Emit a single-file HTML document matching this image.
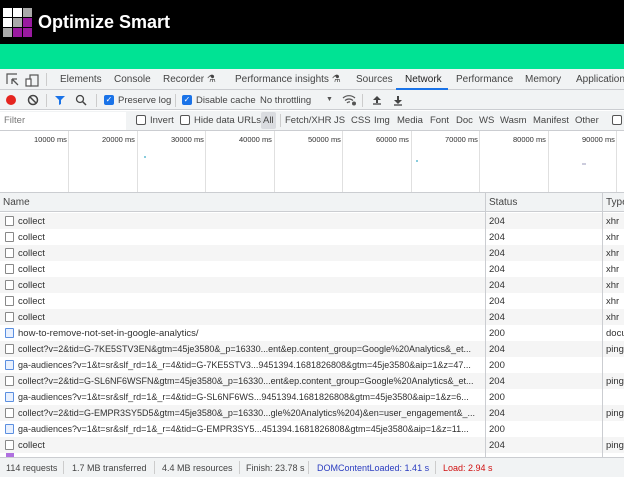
<!DOCTYPE html><html><head><style>
*{margin:0;padding:0;box-sizing:border-box}
body{width:624px;height:477px;overflow:hidden;font-family:"Liberation Sans",sans-serif;font-size:10px;color:#303030;background:#fff;position:relative}
.abs{position:absolute;white-space:nowrap}
.hdr{left:0;top:0;width:624px;height:44px;background:#000}
.grn{left:0;top:44px;width:624px;height:25px;background:#00e394}
.tabs{left:0;top:69px;width:624px;height:21px;background:#f1f3f4;border-bottom:1px solid #cbcdd1}
.tb{left:0;top:90px;width:624px;height:20px;background:#f1f3f4;border-bottom:1px solid #cbcdd1}
.fl{left:0;top:111px;width:624px;height:20px;background:#f1f3f4;border-bottom:1px solid #cbcdd1}
.t{font-size:10px;color:#444}
.s{font-size:9.5px;color:#444}
.cb{width:10px;height:10px;border:1px solid #555;border-radius:2px;background:#fff}
.cbc{width:10px;height:10px;border-radius:2px;background:#1a73e8;color:#fff;font-size:8px;line-height:10px;text-align:center}
.row{left:0;width:624px;height:16px;font-size:9.5px;line-height:17px}
.g{background:#f5f5f5}
.ic{position:absolute;left:5px;top:3px;width:9px;height:10px;border:1px solid #888;border-radius:1px;background:#fff}
.ic.d{border-color:#5b8fe0;background:#e8f0fe}
.vl{top:193px;width:1px;height:264px;background:#cbcdd1}
.tl{top:131px;width:1px;height:61px;background:#e0e0e0}
</style></head><body>
<div class="abs hdr"></div>
<div class="abs" style="left:3px;top:8px;width:30px;height:30px">
<div class="abs" style="left:0;top:0;width:9px;height:9px;background:#fff"></div>
<div class="abs" style="left:10px;top:0;width:9px;height:9px;background:#fff"></div>
<div class="abs" style="left:20px;top:0;width:9px;height:9px;background:#aaa"></div>
<div class="abs" style="left:0;top:10px;width:9px;height:9px;background:#fff"></div>
<div class="abs" style="left:10px;top:10px;width:9px;height:9px;background:#aaa"></div>
<div class="abs" style="left:20px;top:10px;width:9px;height:9px;background:#9a1aa0"></div>
<div class="abs" style="left:0;top:20px;width:9px;height:9px;background:#aaa"></div>
<div class="abs" style="left:10px;top:20px;width:9px;height:9px;background:#9a1aa0"></div>
<div class="abs" style="left:20px;top:20px;width:9px;height:9px;background:#9a1aa0"></div>
</div>
<div class="abs" style="left:38px;top:9px;color:#fff;font-size:18px;font-weight:bold;line-height:26px">Optimize Smart</div>
<div class="abs grn"></div>
<div class="abs tabs"></div>
<svg class="abs" style="left:5px;top:72px" width="36" height="16"><path d="M2 12V2h10" fill="none" stroke="#555" stroke-width="1.2"/><path d="M7 7l6 6M7 7v5M7 7h5" stroke="#555" stroke-width="1.3" fill="none"/><rect x="25" y="3" width="8" height="11" fill="none" stroke="#555" stroke-width="1.2"/><rect x="21" y="7" width="5" height="7" fill="#fff" stroke="#555" stroke-width="1.2"/></svg>
<div class="abs" style="left:46px;top:73px;width:1px;height:13px;background:#ccc"></div>
<div class="abs t" style="left:60px;top:74px">Elements</div>
<div class="abs t" style="left:114px;top:74px">Console</div>
<div class="abs t" style="left:163px;top:74px">Recorder ⚗</div>
<div class="abs t" style="left:235px;top:74px">Performance insights ⚗</div>
<div class="abs t" style="left:356px;top:74px">Sources</div>
<div class="abs t" style="left:405px;top:74px;color:#222">Network</div>
<div class="abs" style="left:396px;top:88px;width:52px;height:2px;background:#1a73e8"></div>
<div class="abs t" style="left:456px;top:74px">Performance</div>
<div class="abs t" style="left:525px;top:74px">Memory</div>
<div class="abs t" style="left:576px;top:74px">Application</div>
<div class="abs tb"></div>
<div class="abs" style="left:6px;top:95px;width:10px;height:10px;border-radius:50%;background:#e52520"></div>
<svg class="abs" style="left:27px;top:94px" width="12" height="12"><circle cx="6" cy="6" r="4.5" fill="none" stroke="#444" stroke-width="1.5"/><path d="M3 3l6 6" stroke="#444" stroke-width="1.5"/></svg>
<div class="abs" style="left:46px;top:94px;width:1px;height:13px;background:#ccc"></div>
<svg class="abs" style="left:54px;top:94px" width="12" height="12"><path d="M1 2h10L7 6v4L5 11V6z" fill="#1a73e8"/></svg>
<svg class="abs" style="left:75px;top:94px" width="12" height="12"><circle cx="5" cy="5" r="3.5" fill="none" stroke="#444" stroke-width="1.3"/><path d="M7.5 7.5L11 11" stroke="#444" stroke-width="1.5"/></svg>
<div class="abs" style="left:96px;top:94px;width:1px;height:13px;background:#ccc"></div>
<div class="abs cbc" style="left:104px;top:95px">✓</div>
<div class="abs s" style="left:118px;top:95px">Preserve log</div>
<div class="abs" style="left:175px;top:94px;width:1px;height:13px;background:#ccc"></div>
<div class="abs cbc" style="left:182px;top:95px">✓</div>
<div class="abs s" style="left:196px;top:95px">Disable cache</div>
<div class="abs s" style="left:260px;top:95px">No throttling</div>
<div class="abs" style="left:326px;top:96px;font-size:7px;color:#555">▼</div>
<svg class="abs" style="left:342px;top:94px" width="16" height="12"><path d="M1 4a9 9 0 0 1 12 0M3 6.5a6 6 0 0 1 8 0M5 9a3 3 0 0 1 3-1" fill="none" stroke="#555" stroke-width="1.2"/><circle cx="12" cy="9.5" r="2" fill="#555"/></svg>
<div class="abs" style="left:362px;top:94px;width:1px;height:13px;background:#ccc"></div>
<svg class="abs" style="left:371px;top:94px" width="40" height="12"><path d="M2 6l4-4 4 4z" fill="#444"/><path d="M5 5h2v4H5z" fill="#444"/><path d="M2 10h8" stroke="#444" stroke-width="1.3"/><path d="M23 6l4 4 4-4z" fill="#444"/><path d="M26 2h2v4h-2z" fill="#444"/><path d="M23 11h8" stroke="#444" stroke-width="1.3"/></svg>
<div class="abs fl"></div>
<div class="abs" style="left:0;top:112px;width:126px;height:18px;background:#fff"></div>
<div class="abs s" style="left:4px;top:115px;color:#777">Filter</div>
<div class="abs cb" style="left:136px;top:115px"></div>
<div class="abs s" style="left:150px;top:115px">Invert</div>
<div class="abs cb" style="left:180px;top:115px"></div>
<div class="abs s" style="left:194px;top:115px">Hide data URLs</div>
<div class="abs" style="left:261px;top:112px;width:15px;height:17px;background:#dadce0;border-radius:2px"></div>
<div class="abs s" style="left:263px;top:115px">All</div>
<div class="abs" style="left:280px;top:114px;width:1px;height:13px;background:#ccc"></div>
<div class="abs s" style="left:285px;top:115px">Fetch/XHR</div>
<div class="abs s" style="left:334px;top:115px">JS</div>
<div class="abs s" style="left:351px;top:115px">CSS</div>
<div class="abs s" style="left:374px;top:115px">Img</div>
<div class="abs s" style="left:397px;top:115px">Media</div>
<div class="abs s" style="left:430px;top:115px">Font</div>
<div class="abs s" style="left:456px;top:115px">Doc</div>
<div class="abs s" style="left:479px;top:115px">WS</div>
<div class="abs s" style="left:500px;top:115px">Wasm</div>
<div class="abs s" style="left:533px;top:115px">Manifest</div>
<div class="abs s" style="left:575px;top:115px">Other</div>
<div class="abs cb" style="left:612px;top:115px"></div>
<div class="abs tl" style="left:68px"></div><div class="abs tl" style="left:137px"></div><div class="abs tl" style="left:205px"></div><div class="abs tl" style="left:274px"></div><div class="abs tl" style="left:342px"></div><div class="abs tl" style="left:411px"></div><div class="abs tl" style="left:479px"></div><div class="abs tl" style="left:548px"></div><div class="abs tl" style="left:616px"></div>
<div class="abs" style="left:34px;top:135px;font-size:7.5px">10000 ms</div>
<div class="abs" style="left:102px;top:135px;font-size:7.5px">20000 ms</div>
<div class="abs" style="left:171px;top:135px;font-size:7.5px">30000 ms</div>
<div class="abs" style="left:239px;top:135px;font-size:7.5px">40000 ms</div>
<div class="abs" style="left:308px;top:135px;font-size:7.5px">50000 ms</div>
<div class="abs" style="left:376px;top:135px;font-size:7.5px">60000 ms</div>
<div class="abs" style="left:445px;top:135px;font-size:7.5px">70000 ms</div>
<div class="abs" style="left:513px;top:135px;font-size:7.5px">80000 ms</div>
<div class="abs" style="left:582px;top:135px;font-size:7.5px">90000 ms</div>
<div class="abs" style="left:144px;top:156px;width:2px;height:2px;background:#8cd"></div>
<div class="abs" style="left:416px;top:160px;width:2px;height:2px;background:#8cd"></div>
<div class="abs" style="left:582px;top:163px;width:4px;height:2px;background:#ccd"></div>
<div class="abs" style="left:0;top:192px;width:624px;height:1px;background:#cbcdd1"></div>
<div class="abs" style="left:0;top:193px;width:624px;height:19px;background:#f1f3f4;border-bottom:1px solid #cbcdd1"></div>
<div class="abs t" style="left:3px;top:197px">Name</div>
<div class="abs t" style="left:489px;top:197px">Status</div>
<div class="abs t" style="left:606px;top:197px">Type</div>
<div class="abs row g" style="top:213px"><span class="ic"></span><span class="abs" style="left:18px">collect</span><span class="abs" style="left:489px">204</span><span class="abs" style="left:606px">xhr</span></div>
<div class="abs row" style="top:229px"><span class="ic"></span><span class="abs" style="left:18px">collect</span><span class="abs" style="left:489px">204</span><span class="abs" style="left:606px">xhr</span></div>
<div class="abs row g" style="top:245px"><span class="ic"></span><span class="abs" style="left:18px">collect</span><span class="abs" style="left:489px">204</span><span class="abs" style="left:606px">xhr</span></div>
<div class="abs row" style="top:261px"><span class="ic"></span><span class="abs" style="left:18px">collect</span><span class="abs" style="left:489px">204</span><span class="abs" style="left:606px">xhr</span></div>
<div class="abs row g" style="top:277px"><span class="ic"></span><span class="abs" style="left:18px">collect</span><span class="abs" style="left:489px">204</span><span class="abs" style="left:606px">xhr</span></div>
<div class="abs row" style="top:293px"><span class="ic"></span><span class="abs" style="left:18px">collect</span><span class="abs" style="left:489px">204</span><span class="abs" style="left:606px">xhr</span></div>
<div class="abs row g" style="top:309px"><span class="ic"></span><span class="abs" style="left:18px">collect</span><span class="abs" style="left:489px">204</span><span class="abs" style="left:606px">xhr</span></div>
<div class="abs row" style="top:325px"><span class="ic d"></span><span class="abs" style="left:18px">how-to-remove-not-set-in-google-analytics/</span><span class="abs" style="left:489px">200</span><span class="abs" style="left:606px">docu</span></div>
<div class="abs row g" style="top:341px"><span class="ic"></span><span class="abs" style="left:18px;font-size:9px">collect?v=2&amp;tid=G-7KE5STV3EN&amp;gtm=45je3580&amp;_p=16330...ent&amp;ep.content_group=Google%20Analytics&amp;_et...</span><span class="abs" style="left:489px">204</span><span class="abs" style="left:606px">ping</span></div>
<div class="abs row" style="top:357px"><span class="ic d"></span><span class="abs" style="left:18px;font-size:9px">ga-audiences?v=1&amp;t=sr&amp;slf_rd=1&amp;_r=4&amp;tid=G-7KE5STV3...9451394.1681826808&amp;gtm=45je3580&amp;aip=1&amp;z=47...</span><span class="abs" style="left:489px">200</span></div>
<div class="abs row g" style="top:373px"><span class="ic"></span><span class="abs" style="left:18px;font-size:9px">collect?v=2&amp;tid=G-SL6NF6WSFN&amp;gtm=45je3580&amp;_p=16330...ent&amp;ep.content_group=Google%20Analytics&amp;_et...</span><span class="abs" style="left:489px">204</span><span class="abs" style="left:606px">ping</span></div>
<div class="abs row" style="top:389px"><span class="ic d"></span><span class="abs" style="left:18px;font-size:9px">ga-audiences?v=1&amp;t=sr&amp;slf_rd=1&amp;_r=4&amp;tid=G-SL6NF6WS...9451394.1681826808&amp;gtm=45je3580&amp;aip=1&amp;z=6...</span><span class="abs" style="left:489px">200</span></div>
<div class="abs row g" style="top:405px"><span class="ic"></span><span class="abs" style="left:18px;font-size:9px">collect?v=2&amp;tid=G-EMPR3SY5D5&amp;gtm=45je3580&amp;_p=16330...gle%20Analytics%204)&amp;en=user_engagement&amp;_...</span><span class="abs" style="left:489px">204</span><span class="abs" style="left:606px">ping</span></div>
<div class="abs row" style="top:421px"><span class="ic d"></span><span class="abs" style="left:18px;font-size:9px">ga-audiences?v=1&amp;t=sr&amp;slf_rd=1&amp;_r=4&amp;tid=G-EMPR3SY5...451394.1681826808&amp;gtm=45je3580&amp;aip=1&amp;z=11...</span><span class="abs" style="left:489px">200</span></div>
<div class="abs row g" style="top:437px"><span class="ic"></span><span class="abs" style="left:18px">collect</span><span class="abs" style="left:489px">204</span><span class="abs" style="left:606px">ping</span></div>
<div class="abs" style="left:6px;top:453px;width:8px;height:4px;background:#b070e0"></div>
<div class="abs vl" style="left:485px"></div>
<div class="abs vl" style="left:602px"></div>
<div class="abs" style="left:0;top:457px;width:624px;height:20px;background:#f1f3f4;border-top:1px solid #cbcdd1"></div>
<div class="abs t" style="left:6px;top:463px;font-size:9px">114 requests</div>
<div class="abs" style="left:63px;top:461px;width:1px;height:13px;background:#ccc"></div>
<div class="abs t" style="left:72px;top:463px;font-size:9px">1.7 MB transferred</div>
<div class="abs" style="left:154px;top:461px;width:1px;height:13px;background:#ccc"></div>
<div class="abs t" style="left:162px;top:463px;font-size:9px">4.4 MB resources</div>
<div class="abs" style="left:239px;top:461px;width:1px;height:13px;background:#ccc"></div>
<div class="abs t" style="left:246px;top:463px;font-size:9px">Finish: 23.78 s</div>
<div class="abs" style="left:308px;top:461px;width:1px;height:13px;background:#ccc"></div>
<div class="abs" style="left:317px;top:463px;font-size:9px;color:#2a3cc0">DOMContentLoaded: 1.41 s</div>
<div class="abs" style="left:435px;top:461px;width:1px;height:13px;background:#ccc"></div>
<div class="abs" style="left:443px;top:463px;font-size:9px;color:#d01010">Load: 2.94 s</div>
</body></html>
